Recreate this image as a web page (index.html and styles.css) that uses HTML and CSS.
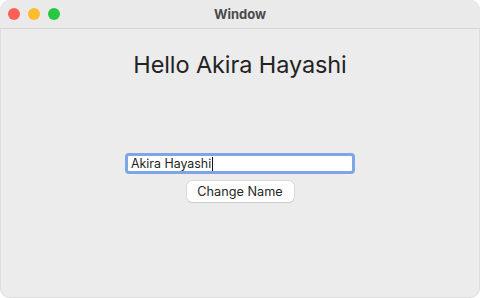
FILE: index.html
```html
<!DOCTYPE html>
<html>
<head>
<meta charset="utf-8">
<link rel="stylesheet" href="styles.css">
</head>
<body>
<div class="window">
  <div class="titlebar">
    <div class="lights">
      <span class="light red"></span>
      <span class="light yellow"></span>
      <span class="light green"></span>
    </div>
    <div class="title">Window</div>
  </div>
  <div class="content">
    <h1 class="greeting">Hello Akira Hayashi</h1>
    <div class="form">
      <div class="field"><span class="value">Akira Hayashi</span><span class="caret"></span></div>
      <button class="btn">Change Name</button>
    </div>
  </div>
</div>
</body>
</html>
```

FILE: styles.css
```css
* { box-sizing: border-box; }
html, body { margin: 0; padding: 0; background: #ffffff; }
body { width: 480px; height: 298px; font-family: Inter, "Noto Sans", sans-serif; }
.window {
  width: 480px; height: 298px;
  background: #ececec;
  border-radius: 10px;
  overflow: hidden;
  display: flex; flex-direction: column;
  box-shadow: inset 0 0 0 1px #dedede;
}
.titlebar {
  height: 29px;
  background: #eaeaea;
  border-bottom: 1px solid #d6d6d6;
  display: flex; align-items: center;
  position: relative;
}
.lights { display: flex; gap: 8px; padding-left: 8px; }
.light { width: 12px; height: 12px; border-radius: 50%; display: block; }
.red { background: #fe5f57; }
.yellow { background: #febc2e; }
.green { background: #28c840; }
.title {
  position: absolute; left: 0; right: 0; top: 0; bottom: 0;
  display: flex; align-items: center; justify-content: center;
  font-size: 13px; font-weight: 700; color: #4a4a4a;
}
.content { flex: 1; display: flex; flex-direction: column; align-items: center; }
.greeting {
  margin: 20px 0 0 0;
  font-size: 23.5px; font-weight: 400; color: #232323;
  line-height: 32px;
  letter-spacing: -0.1px;
}
.form { margin-top: 72px; display: flex; flex-direction: column; align-items: center; }
.field {
  width: 230px; height: 21px;
  background: #fff;
  border: 3px solid #7ea6e6;
  border-radius: 4px;
  display: flex; align-items: center;
  padding-left: 3px;
  font-size: 12.4px; color: #1f1f1f;
}
.caret { width: 1px; height: 14px; background: #111; margin-left: 1px; }
.btn {
  margin-top: 7px;
  width: 107px; height: 21px;
  background: #fff;
  border: none;
  border-radius: 5px;
  box-shadow: 0 0 0 0.5px #c8c8c8, 0 1px 1px rgba(0,0,0,0.12);
  font-family: Inter, "Noto Sans", sans-serif;
  font-size: 12.7px; color: #262626;
  padding: 0;
}
```
